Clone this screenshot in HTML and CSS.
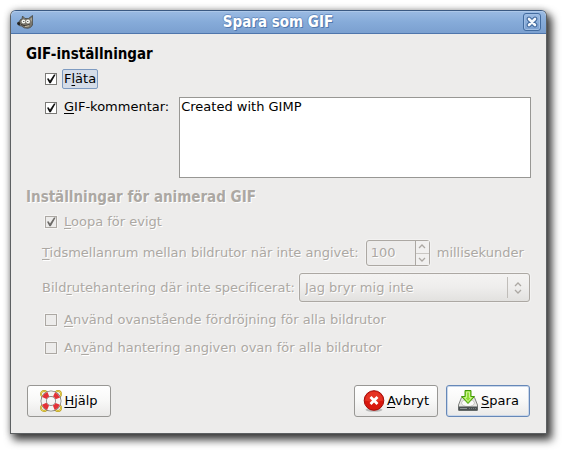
FILE: index.html
```html
<!DOCTYPE html>
<html lang="sv">
<head>
<meta charset="utf-8">
<title>Spara som GIF</title>
<link rel="stylesheet" href="styles.css">
</head>
<body>
<main class="dialog">
  <header class="titlebar">
    <svg class="titlebar-icon" viewBox="0 0 16 14" aria-hidden="true">
      <path d="M3 5 L5 4 L5.500 1 L8 3.500 L11.500 3.500 L15.500 0.500 L15.800 8 Q15.500 12.500 11 13.200 Q7 13.600 4.500 11 L2 10.500 L0.500 8.500 Q0.500 6.500 2.500 7 Z" fill="#7a766c" stroke="#454745" stroke-width="0.800"/>
      <path d="M13 4 L15 2.500 L15 7 Z" fill="#a9a493"/>
      <circle cx="6.500" cy="6.500" r="1.900" fill="#f4f4ee"/>
      <circle cx="11" cy="6.500" r="2" fill="#f4f4ee"/>
      <circle cx="6.800" cy="6.500" r="0.600" fill="#222"/>
      <circle cx="10.800" cy="6.500" r="0.600" fill="#222"/>
      <ellipse cx="1.800" cy="8.600" rx="1.500" ry="1.700" fill="#222"/>
      <path d="M4 9.500 Q8 12 12.500 9.500" fill="none" stroke="#3a352f" stroke-width="1"/>
      <path d="M8 11.500 L12 10.800" stroke="#c8bda3" stroke-width="1"/>
    </svg>
    <h1 class="titlebar-title">Spara som GIF</h1>
    <button class="close" type="button" aria-label="Stäng">
      <svg viewBox="0 0 12 12" aria-hidden="true">
        <path d="M3 3 L9 9 M9 3 L3 9" stroke="#3f679b" stroke-width="4.600" stroke-linecap="round"/>
        <path d="M3 3 L9 9 M9 3 L3 9" stroke="#f3f7fc" stroke-width="2.600" stroke-linecap="round"/>
      </svg>
    </button>
  </header>
  <form class="content">
    <section>
      <h2 class="heading">GIF-inställningar</h2>
      <div class="check-row">
        <input class="check" type="checkbox" id="interlace" checked>
        <label class="focused" for="interlace">F<u>l</u>äta</label>
      </div>
      <div class="check-row comment-row">
        <input class="check" type="checkbox" id="comment" checked>
        <label for="comment"><u>G</u>IF-kommentar:</label>
        <textarea class="comment" aria-label="GIF-kommentar" spellcheck="false">Created with GIMP</textarea>
      </div>
    </section>
    <section class="disabled">
      <h2 class="heading">Inställningar för animerad GIF</h2>
      <div class="check-row">
        <input class="check" type="checkbox" id="loop" checked disabled>
        <label for="loop"><u>L</u>oopa för evigt</label>
      </div>
      <div class="field-row delay-row">
        <label for="delay"><u>T</u>idsmellanrum mellan bildrutor när inte angivet:</label>
        <span class="spin">
          <input class="spin-value" type="text" inputmode="numeric" id="delay" value="100" disabled>
          <span class="spin-buttons">
            <button type="button" aria-label="Öka" disabled><svg viewBox="0 0 8 5" aria-hidden="true"><path d="M1 4 L4 1 L7 4"/></svg></button>
            <button type="button" aria-label="Minska" disabled><svg viewBox="0 0 8 5" aria-hidden="true"><path d="M1 1 L4 4 L7 1"/></svg></button>
          </span>
        </span>
        <span>millisekunder</span>
      </div>
      <div class="field-row disposal-row">
        <label for="disposal">Bild<u>r</u>utehantering där inte specificerat:</label>
        <span class="combo">
          <select id="disposal" disabled><option>Jag bryr mig inte</option></select>
          <svg class="combo-arrows" viewBox="0 0 8 12" aria-hidden="true"><path d="M1 4 L4 1 L7 4 M1 8 L4 11 L7 8"/></svg>
        </span>
      </div>
      <div class="check-row">
        <input class="check" type="checkbox" id="delay-all" disabled>
        <label for="delay-all"><u>A</u>nvänd ovanstående fördröjning för alla bildrutor</label>
      </div>
      <div class="check-row">
        <input class="check" type="checkbox" id="disposal-all" disabled>
        <label for="disposal-all">An<u>v</u>änd hantering angiven ovan för alla bildrutor</label>
      </div>
    </section>
    <footer class="actions">
      <button class="action help" type="button">
        <svg viewBox="0 0 22 22" aria-hidden="true">
          <g fill="none" stroke="#b89b16" stroke-width="1.800"><circle cx="4" cy="4" r="3"/><circle cx="18" cy="4" r="3"/><circle cx="4" cy="18" r="3"/><circle cx="18" cy="18" r="3"/></g>
          <g fill="none" stroke="#f1dc61" stroke-width="0.800"><circle cx="4" cy="4" r="3"/><circle cx="18" cy="4" r="3"/><circle cx="4" cy="18" r="3"/><circle cx="18" cy="18" r="3"/></g>
          <circle cx="11" cy="11" r="7.300" fill="none" stroke="#85827d" stroke-width="6.400"/>
          <circle cx="11" cy="11" r="7.300" fill="none" stroke="#f4f4f2" stroke-width="4.800"/>
          <circle cx="11" cy="11" r="7.300" fill="none" stroke="#e33237" stroke-width="4.800" stroke-dasharray="5.600 5.867" stroke-dashoffset="-2.933"/>
        </svg>
        <span><u>H</u>jälp</span>
      </button>
      <button class="action cancel" type="button">
        <svg viewBox="0 0 22 22" aria-hidden="true">
          <ellipse cx="11" cy="19.800" rx="8.500" ry="2" fill="#777" opacity="0.450"/>
          <circle cx="11" cy="10.500" r="9.800" fill="#d9180e" stroke="#a20b08"/>
          <path d="M2 10.500 A9 9 0 0 1 20 10.500 Q11 13 2 10.500" fill="#ef4b36" opacity="0.550"/>
          <path d="M7.500 7 L14.500 14 M14.500 7 L7.500 14" stroke="#fff" stroke-width="2.800"/>
        </svg>
        <span><u>A</u>vbryt</span>
      </button>
      <button class="action default" type="button">
        <svg viewBox="0 0 22 22" aria-hidden="true">
          <path d="M4.500 7.500 H17.500 L20.500 15 V20 Q20.500 20.500 20 20.500 H2 Q1.500 20.500 1.500 20 V15 Z" fill="#e6e6e3" stroke="#7f827e"/>
          <ellipse cx="11" cy="13" rx="6.500" ry="3.500" fill="#fafaf9" stroke="#bdbdb9" stroke-width="0.800"/>
          <path d="M1.500 16.500 H20.500 V20.500 H1.500 Z" fill="#4b5152"/>
          <path d="M3 18.500 H10" stroke="#8f9596"/>
          <path d="M12 18.500 H19" stroke="#767c7d" stroke-dasharray="1 1"/>
          <path d="M8 0.500 H14 V6.500 H17.500 L11 13.500 L4.500 6.500 H8 Z" fill="#8fdc35" stroke="#439a08"/>
          <path d="M9.500 2 H12.500 V7.500 H14.500 L11 11.500 L7.500 7.500 H9.500 Z" fill="none" stroke="#d3f5a3" stroke-width="0.900"/>
        </svg>
        <span><u>S</u>para</span>
      </button>
    </footer>
  </form>
</main>
</body>
</html>
```
FILE: styles.css
```css
* {
  box-sizing: border-box;
}

body {
  margin: 0;
  padding: 10px 20px 20px 10px;
  background: #fff;
  color: #000;
  font: 13px/18px "DejaVu Sans", sans-serif;
}

button,
input,
select,
textarea {
  margin: 0;
  color: inherit;
  font: inherit;
}

u {
  text-decoration: underline 1px;
  text-underline-offset: 2px;
}

.dialog {
  border: 1px solid #5d6062;
  border-top-color: #3b5a83;
  border-radius: 6px 6px 0 0;
  background: #edeceb;
  box-shadow: 4px 5px 8px 1px rgba(0, 0, 0, 0.75), 0 0 7px rgba(0, 0, 0, 0.25);
}

.titlebar {
  display: flex;
  align-items: center;
  height: 23px;
  padding: 0 5px 0 6px;
  border-bottom: 1px solid #4f76ac;
  border-radius: 5px 5px 0 0;
  background: linear-gradient(#9bbbe3, #86abd9 50%, #7ba0d0);
  box-shadow: inset 0 1px #adc8e9;
}

.titlebar-icon {
  width: 16px;
  height: 14px;
}

.titlebar-title,
.heading {
  font-family: "DejaVu Sans Condensed", "DejaVu Sans", sans-serif;
  font-size: 15px;
  font-weight: bold;
}

.titlebar-title {
  flex: 1;
  margin: 0;
  color: #fff;
  text-align: center;
  text-shadow: 1px 1px #5279ae, -1px 0 #6a90c4, 0 -1px #6a90c4;
}

.close {
  display: flex;
  align-items: center;
  justify-content: center;
  width: 18px;
  height: 18px;
  padding: 0;
  border: 1px solid #426b9f;
  border-radius: 3px;
  background: linear-gradient(#9bbbe3, #7ba0d0);
  box-shadow: inset 0 0 0 1px #a0bee4;
}

.close svg {
  width: 12px;
  height: 12px;
  fill: none;
}

.content {
  padding: 11px 15px 16px;
}

.heading {
  margin: 0 0 2px;
}

.check-row {
  display: flex;
  align-items: center;
  gap: 7px;
  min-height: 28px;
  padding-left: 19px;
}

.check {
  appearance: none;
  display: grid;
  flex: none;
  width: 12px;
  height: 12px;
  border: 1px solid #7b7a77;
  background: #fff;
}

.check:checked::before {
  content: "";
  width: 10px;
  height: 10px;
  background: #111;
  clip-path: polygon(10% 48%, 25% 42%, 40% 66%, 80% 5%, 97% 5%, 48% 92%, 34% 92%);
}

.focused {
  margin: 0 -2px;
  padding: 0 1px;
  border: 1px solid #7e9bc1;
  border-radius: 2px;
  background: #d5dde8;
}

.comment-row {
  align-items: flex-start;
  margin-top: 4px;
}

.comment-row .check {
  margin-top: 5px;
}

.comment-row label {
  margin: 1px 3px 0 0;
}

.comment {
  flex: 1;
  min-width: 0;
  height: 81px;
  padding: 0 1px;
  border: 1px solid #989794;
  border-radius: 0;
  background: #fff;
  outline: none;
  resize: none;
}

.disabled {
  margin-top: 10px;
  color: #aca8a3;
  text-shadow: 1px 1px #fff;
}

.disabled .check {
  border-color: #aca8a3;
  background: #edeceb;
  box-shadow: 0 0 0 1px #f5f4f3;
}

.disabled .check:checked::before {
  background: #6d6b68;
}

.field-row {
  display: flex;
  align-items: center;
  gap: 7px;
  padding-left: 16px;
}

.delay-row {
  margin-top: 4px;
}

.disposal-row {
  gap: 4px;
  margin: 7px 0 4px;
}

.spin {
  display: flex;
  width: 64px;
  height: 26px;
  border: 1px solid #aca8a3;
  border-radius: 3px;
  box-shadow: 0 0 0 1px #f3f2f1;
}

.spin-value {
  flex: 1;
  min-width: 0;
  padding: 0 4px;
  border: 0;
  background: none;
  text-shadow: inherit;
}

.spin-buttons {
  display: flex;
  flex-direction: column;
  width: 14px;
  border-left: 1px solid #aca8a3;
}

.spin-buttons button {
  display: flex;
  flex: 1;
  align-items: center;
  justify-content: center;
  padding: 0;
  border: 0;
  background: #f1f0ef;
}

.spin-buttons button + button {
  border-top: 1px solid #c9c6c2;
}

.spin-buttons svg {
  width: 8px;
  height: 5px;
}

.disabled svg {
  fill: none;
  stroke: #aca8a3;
  stroke-width: 1.3;
}

.combo {
  display: grid;
  flex: 1;
  align-items: center;
  margin-right: 1px;
}

.combo select,
.combo-arrows {
  grid-area: 1 / 1;
}

.combo select {
  appearance: none;
  width: 100%;
  height: 29px;
  padding: 0 5px;
  border: 1px solid #aca8a3;
  border-radius: 3px;
  background: linear-gradient(#f4f3f2, #eeedec 50%, #e2e1df);
  box-shadow: 0 0 0 1px #f3f2f1;
  opacity: 1;
  text-shadow: inherit;
}

.combo-arrows {
  justify-self: end;
  width: 8px;
  height: 12px;
  margin-right: 8px;
}

.combo::after {
  content: "";
  grid-area: 1 / 1;
  justify-self: end;
  width: 1px;
  height: 21px;
  margin-right: 22px;
  background: #c0bdb9;
}

.actions {
  display: flex;
  gap: 8px;
  margin: 23px 1px 0;
}

.action {
  display: flex;
  align-items: center;
  justify-content: center;
  gap: 2px;
  width: 84px;
  height: 32px;
  padding: 0;
  border: 1px solid #989794;
  border-radius: 3px;
  background: linear-gradient(#fff, #f8f8f7 50%, #eae9e8);
}

.action svg {
  width: 22px;
  height: 22px;
}

.help {
  margin-right: auto;
}

.default {
  border-color: #6688b8;
  box-shadow: inset 0 0 0 1px #c9d7ea;
}
```
